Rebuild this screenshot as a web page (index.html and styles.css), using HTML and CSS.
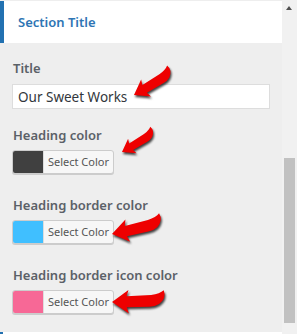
FILE: index.html
```html
<!DOCTYPE html>
<html lang="en">
<head>
    <meta charset="UTF-8">
    <meta name="viewport" content="width=device-width, initial-scale=1.0">
    <title>Section Title</title>
    <link rel="stylesheet" href="styles.css">
</head>
<body>
    <div class="frame">
        <div class="panel">
            <div class="section-head">Section Title</div>
            <div class="controls">
                <div class="control control-text">
                    <label class="control-label" for="titleInput">Title</label>
                    <input type="text" id="titleInput" class="text-field" value="Our Sweet Works">
                </div>
                <div class="control">
                    <span class="control-label">Heading color</span>
                    <button class="color-btn"><span class="swatch swatch-dark"></span><span class="color-text">Select Color</span></button>
                </div>
                <div class="control">
                    <span class="control-label">Heading border color</span>
                    <button class="color-btn"><span class="swatch swatch-blue"></span><span class="color-text">Select Color</span></button>
                </div>
                <div class="control">
                    <span class="control-label">Heading border icon color</span>
                    <button class="color-btn"><span class="swatch swatch-pink"></span><span class="color-text">Select Color</span></button>
                </div>
            </div>
            <div class="next-section"></div>

            <!-- annotation arrows drawn over the form -->
            <svg class="arrows" width="282" height="334" viewBox="0 0 282 334">
                <defs>
                    <path id="arrow" d="M0,0 L17,-12 L15,-5.5 L40,-6.5 Q49,-7.5 53,-11 Q56,-3 48,3 Q44,5.5 38,5.5 L15,5.5 L17,12 Z"/>
                </defs>
                <use href="#arrow" transform="translate(134,95) rotate(-30) scale(0.82)"/>
                <use href="#arrow" transform="translate(122,152) rotate(-30) scale(0.7)"/>
                <use href="#arrow" transform="translate(112,234) rotate(-12) scale(0.95)"/>
                <use href="#arrow" transform="translate(112,302) rotate(-1) scale(0.98)"/>
            </svg>
        </div>
        <div class="scrollbar">
            <div class="scroll-up"></div>
            <div class="scroll-thumb"></div>
        </div>
    </div>
</body>
</html>
```

FILE: styles.css
```css
body {
    margin: 0;
    padding: 0;
    font-family: "Noto Sans", "Open Sans", sans-serif;
    background-color: #eeeeee;
    width: 297px;
    height: 334px;
    overflow: hidden;
}

.frame {
    display: flex;
    height: 334px;
}

.panel {
    position: relative;
    width: 282px;
    display: flex;
    flex-direction: column;
    background-color: #eeeeee;
}

.section-head {
    margin-top: 1px;
    height: 42px;
    line-height: 42px;
    background: white;
    border-left: 4px solid #2271b1;
    padding-left: 14px;
    color: #2e75b4;
    font-size: 13px;
    font-weight: 600;
}

.controls {
    flex: 1;
    display: flex;
    flex-direction: column;
    gap: 21px;
    padding: 15px 12px 0 12px;
}

.control {
    display: flex;
    flex-direction: column;
    align-items: flex-start;
    gap: 5px;
}

.control-text {
    gap: 6px;
    margin-bottom: -5px;
}

.control-label {
    font-size: 13px;
    font-weight: 600;
    line-height: 20px;
    color: #5b6168;
    padding-left: 1px;
}

.text-field {
    box-sizing: border-box;
    width: 258px;
    height: 25px;
    margin: 0;
    padding: 0 5px;
    border: 1px solid #dddddd;
    background: white;
    font-family: inherit;
    font-size: 13.5px;
    color: #32373c;
    outline: none;
}

.color-btn {
    display: flex;
    align-items: stretch;
    box-sizing: border-box;
    height: 24px;
    width: 102px;
    padding: 0;
    margin: 0;
    border: 1px solid #cccccc;
    border-radius: 3px;
    background: #f7f7f7;
    box-shadow: 0 1px 0 #cccccc;
    overflow: hidden;
    font-family: inherit;
    cursor: pointer;
}

.swatch {
    width: 30px;
    flex: none;
}

.swatch-dark { background-color: #404040; }
.swatch-blue { background-color: #40bfff; }
.swatch-pink { background-color: #f76896; }

.color-text {
    flex: 1;
    border-left: 1px solid #dddddd;
    font-size: 11px;
    line-height: 22px;
    color: #555555;
    text-align: center;
}

.next-section {
    height: 2px;
    background: white;
    border-left: 3px solid #2271b1;
}

.arrows {
    position: absolute;
    left: 0;
    top: 0;
    pointer-events: none;
    fill: #ee0000;
    filter: drop-shadow(1px 2px 1px rgba(0, 0, 0, 0.75));
}

.scrollbar {
    width: 15px;
    display: flex;
    flex-direction: column;
    background-color: #f1f1f1;
}

.scroll-up {
    width: 0;
    height: 0;
    margin: 6px 0 0 4px;
    border-left: 3.5px solid transparent;
    border-right: 3.5px solid transparent;
    border-bottom: 4px solid #505050;
}

.scroll-thumb {
    margin: 148px 0 0 2px;
    width: 11px;
    height: 165px;
    background-color: #c1c1c1;
}
```
